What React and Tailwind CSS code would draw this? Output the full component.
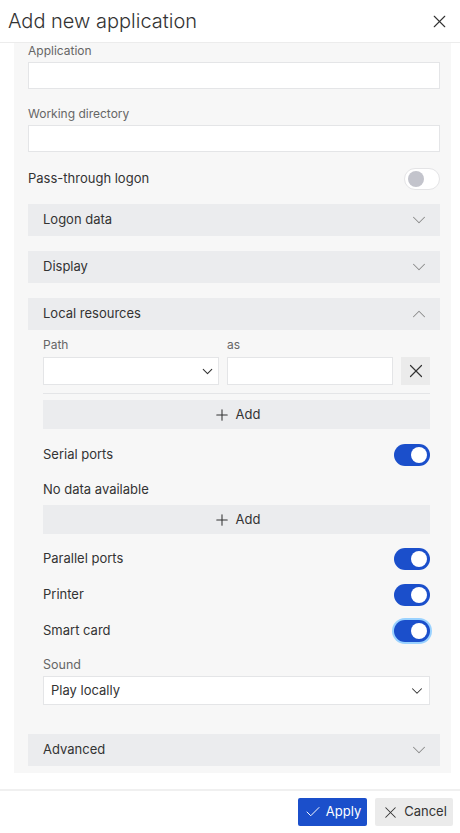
import { X, Check, Plus, ChevronDown, ChevronUp } from 'lucide-react';

const font = { fontFamily: 'Inter, "Noto Sans", sans-serif' };

const Toggle = ({ on, focused }) => (
  <div
    className={`w-[36px] h-[22px] rounded-full flex items-center px-[3px] ${
      on ? 'bg-[#1b4fcb] justify-end' : 'bg-white border border-[#e4e4e6] justify-start'
    } ${focused ? 'ring-2 ring-[#9ad2ff]' : ''}`}
  >
    <div className={`w-[16px] h-[16px] rounded-full ${on ? 'bg-white' : 'bg-[#c3c4cc]'}`} />
  </div>
);

const Accordion = ({ title, open }) => (
  <div className="h-[32px] bg-[#ebecee] flex items-center justify-between pl-[15px] pr-[10px]">
    <span className="text-[13px] text-[#333]">{title}</span>
    {open ? (
      <ChevronUp className="w-[22px] h-[22px] text-[#8a8a8a]" strokeWidth={1.1} />
    ) : (
      <ChevronDown className="w-[22px] h-[22px] text-[#8a8a8a]" strokeWidth={1.1} />
    )}
  </div>
);

const AddButton = () => (
  <div className="h-[29px] bg-[#ebecee] flex items-center justify-center gap-[5px] text-[13px] text-[#333]">
    <Plus className="w-[18px] h-[18px]" strokeWidth={1.4} />
    <span>Add</span>
  </div>
);

const ToggleRow = ({ label, on, focused }) => (
  <div className="h-[22px] flex items-center justify-between">
    <span className="text-[13px] text-[#333]">{label}</span>
    <Toggle on={on} focused={focused} />
  </div>
);

export default function App() {
  return (
    <div className="w-[460px] h-[833px] bg-white flex flex-col overflow-hidden" style={font}>
      <header className="h-[43px] shrink-0 border-b border-[#ececec] flex items-center justify-between pl-[8px] pr-[10px]">
        <h1 className="text-[20px] font-light text-[#333]">Add new application</h1>
        <X className="w-[21px] h-[21px] text-[#333]" strokeWidth={1.3} />
      </header>

      <div className="flex-1 overflow-hidden pl-[14px] pr-[9px] pt-[3px]">
        <div className="bg-[#f7f7f7] pl-[14px] pr-[11px] pb-[7px]">
          <div className="-mt-[3px]">
            <div className="text-[12px] leading-[16px] text-[#666]">Application</div>
            <div className="mt-[3px] h-[27px] bg-white border border-[#e4e5e7]" />

            <div className="mt-[17px] text-[12px] leading-[16px] text-[#666]">Working directory</div>
            <div className="mt-[3px] h-[27px] bg-white border border-[#e4e5e7]" />
          </div>

          <div className="mt-[16px] h-[21px] flex items-center justify-between">
            <span className="text-[13px] text-[#333]">Pass-through logon</span>
            <Toggle on={false} />
          </div>

          <div className="mt-[15px] flex flex-col gap-[15px]">
            <Accordion title="Logon data" />
            <Accordion title="Display" />
            <div>
              <Accordion title="Local resources" open />
              <div className="pl-[15px] pr-[10px] pt-[7px] pb-[14px]">
                <div className="flex gap-[8px]">
                  <div className="w-[176px]">
                    <div className="text-[12px] leading-[16px] text-[#666]">Path</div>
                    <div className="mt-[4px] h-[28px] bg-white border border-[#e4e5e7] flex items-center justify-end pr-[2px]">
                      <ChevronDown className="w-[17px] h-[17px] text-[#333]" strokeWidth={1.5} />
                    </div>
                  </div>
                  <div className="flex-1">
                    <div className="text-[12px] leading-[16px] text-[#666]">as</div>
                    <div className="mt-[4px] h-[28px] bg-white border border-[#e4e5e7]" />
                  </div>
                  <div className="w-[29px] flex flex-col justify-end">
                    <div className="h-[28px] bg-[#ebebeb] flex items-center justify-center">
                      <X className="w-[22px] h-[22px] text-[#333]" strokeWidth={1.3} />
                    </div>
                  </div>
                </div>
                <div className="mt-[8px] h-px bg-[#e4e5e7]" />
                <div className="mt-[6px]">
                  <AddButton />
                </div>

                <div className="mt-[15px]">
                  <ToggleRow label="Serial ports" on />
                </div>
                <div className="mt-[15px] text-[13px] leading-[16px] text-[#333]">No data available</div>
                <div className="mt-[8px]">
                  <AddButton />
                </div>

                <div className="mt-[14px] flex flex-col gap-[14px]">
                  <ToggleRow label="Parallel ports" on />
                  <ToggleRow label="Printer" on />
                  <ToggleRow label="Smart card" on focused />
                </div>

                <div className="mt-[15px] text-[12.5px] leading-[16px] text-[#666]">Sound</div>
                <div className="mt-[3px] h-[29px] bg-white border border-[#e4e5e7] flex items-center justify-between pl-[7px] pr-[3px]">
                  <span className="text-[13px] text-[#333]">Play locally</span>
                  <ChevronDown className="w-[18px] h-[18px] text-[#333]" strokeWidth={1.4} />
                </div>
              </div>
            </div>
            <Accordion title="Advanced" />
          </div>
        </div>
      </div>

      <footer className="h-[44px] shrink-0 border-t-2 border-[#f0f0f0] flex items-start justify-end gap-[8px] pt-[7px] pr-[7px]">
        <button className="h-[28px] w-[69px] bg-[#1b4fcb] text-white text-[13px] flex items-center justify-center gap-[4px] rounded-[2px]">
          <Check className="w-[18px] h-[18px]" strokeWidth={1.3} />
          <span>Apply</span>
        </button>
        <button className="h-[28px] w-[78px] bg-[#ebebeb] text-[#333] text-[13px] flex items-center justify-center gap-[4px] rounded-[2px]">
          <X className="w-[19px] h-[19px]" strokeWidth={1.3} />
          <span>Cancel</span>
        </button>
      </footer>
    </div>
  );
}
